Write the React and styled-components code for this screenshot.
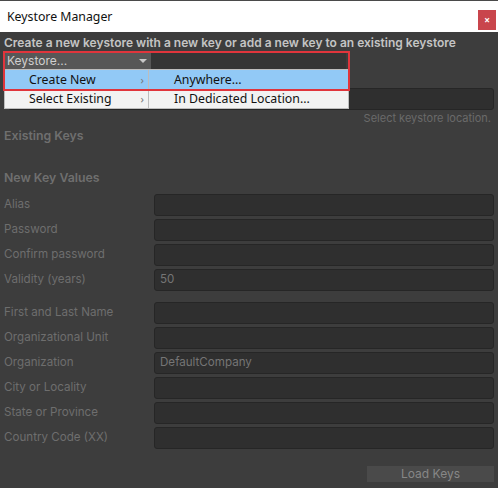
import styled, { createGlobalStyle } from 'styled-components';

const GlobalStyle = createGlobalStyle`
  html, body {
    margin: 0;
    padding: 0;
    background: #3d3d3d;
  }
`;

const Window = styled.div`
  position: relative;
  width: 498px;
  height: 488px;
  display: flex;
  flex-direction: column;
  background: #3d3d3d;
  font-family: Inter, "Liberation Sans", sans-serif;
  overflow: hidden;
`;

const TitleBar = styled.div`
  height: 31px;
  border-top: 1px solid #4a4a4a;
  background: #ffffff;
  display: flex;
  align-items: center;
  justify-content: space-between;
  padding: 0 2px 0 7px;
  font-family: "Noto Sans", "Open Sans", sans-serif;
  font-size: 12.3px;
  color: #111;
`;

const CloseButton = styled.div`
  width: 18px;
  height: 20px;
  background: #c9454c;
  color: #fff;
  font-size: 10px;
  font-weight: bold;
  display: flex;
  align-items: center;
  justify-content: center;
  margin-top: 6px;
`;

const Body = styled.div`
  flex: 1;
  display: flex;
  flex-direction: column;
  padding: 3px 4px 6px 4px;
`;

const Headline = styled.div`
  font-size: 12px;
  font-weight: 600;
  line-height: 16px;
  color: #c4c4c4;
  white-space: nowrap;
`;

const PickerRow = styled.div`
  display: flex;
  height: 16px;
  margin-top: 2px;
  margin-left: 1px;
`;

const Dropdown = styled.div`
  width: 146px;
  box-sizing: border-box;
  background: #575757;
  color: #cfcfcf;
  font-size: 12px;
  line-height: 16px;
  padding-left: 2px;
  display: flex;
  justify-content: space-between;
  align-items: center;
  padding-right: 4px;
`;

const Caret = styled.span`
  width: 0;
  height: 0;
  border-left: 4px solid transparent;
  border-right: 4px solid transparent;
  border-top: 4px solid #c8c8c8;
`;

const Filler = styled.div`
  width: 195px;
  background: #353535;
`;

const PathField = styled.div`
  height: 22px;
  box-sizing: border-box;
  margin: 19px 0 0 4px;
  background: #2f2f2f;
  border: 1px solid #262626;
  border-radius: 3px;
`;

const Hint = styled.div`
  font-size: 11px;
  line-height: 14px;
  color: #6a6a6a;
  text-align: right;
  padding-right: 3px;
  margin-top: 1px;
`;

const SectionTitle = styled.div`
  font-size: 12.3px;
  font-weight: 600;
  line-height: 14px;
  color: #6f6f6f;
  margin-top: ${(p) => p.$gap}px;
`;

const Group = styled.div`
  display: flex;
  flex-direction: column;
  gap: 3px;
  margin-top: ${(p) => p.$gap}px;
`;

const Row = styled.div`
  display: grid;
  grid-template-columns: 150px 1fr;
  align-items: center;
  height: 22px;
`;

const Label = styled.div`
  font-size: 11.6px;
  line-height: 14px;
  color: #6e6e6e;
  white-space: nowrap;
  margin-top: -3px;
`;

const Field = styled.div`
  height: 22px;
  box-sizing: border-box;
  background: #2f2f2f;
  border: 1px solid #262626;
  border-radius: 3px;
  font-size: 11.6px;
  color: #757575;
  padding-left: 5px;
  line-height: 18px;
`;

const Footer = styled.div`
  margin-top: auto;
  display: flex;
  justify-content: flex-end;
`;

const LoadButton = styled.div`
  width: 127px;
  height: 16px;
  background: #4a4a4a;
  color: #878787;
  font-size: 12px;
  line-height: 16px;
  text-align: center;
`;

const Menu = styled.div`
  position: absolute;
  top: ${(p) => p.$top}px;
  left: ${(p) => p.$left}px;
  width: ${(p) => p.$width}px;
  background: #f2f2f2;
  border: 1px solid #bdbdbd;
  box-sizing: border-box;
  font-family: "Noto Sans", "Open Sans", sans-serif;
  font-size: 12.3px;
  color: #111;
`;

const MenuItem = styled.div`
  height: 19px;
  display: flex;
  align-items: center;
  justify-content: space-between;
  padding: 0 4px 0 ${(p) => p.$indent}px;
  background: ${(p) => (p.$active ? '#92c9f6' : 'transparent')};
`;

const Chevron = styled.span`
  color: #777;
  font-size: 11px;
`;

const Annotation = styled.div`
  position: absolute;
  top: 51px;
  left: 3px;
  width: 347px;
  height: 40px;
  box-sizing: border-box;
  border: 2px solid #e0353c;
  pointer-events: none;
`;

const firstGroup = [
  ['Alias', ''],
  ['Password', ''],
  ['Confirm password', ''],
  ['Validity (years)', '50'],
];

const secondGroup = [
  ['First and Last Name', ''],
  ['Organizational Unit', ''],
  ['Organization', 'DefaultCompany'],
  ['City or Locality', ''],
  ['State or Province', ''],
  ['Country Code (XX)', ''],
];

const App = () => {
  return (
    <Window>
      <GlobalStyle />
      <TitleBar>
        <span>Keystore Manager</span>
        <CloseButton>×</CloseButton>
      </TitleBar>
      <Body>
        <Headline>Create a new keystore with a new key or add a new key to an existing keystore</Headline>
        <PickerRow>
          <Dropdown>
            Keystore...
            <Caret />
          </Dropdown>
          <Filler />
        </PickerRow>
        <PathField />
        <Hint>Select keystore location.</Hint>
        <SectionTitle $gap={4}>Existing Keys</SectionTitle>
        <SectionTitle $gap={28}>New Key Values</SectionTitle>
        <Group $gap={9}>
          {firstGroup.map(([label, value]) => (
            <Row key={label}>
              <Label>{label}</Label>
              <Field>{value}</Field>
            </Row>
          ))}
        </Group>
        <Group $gap={11}>
          {secondGroup.map(([label, value]) => (
            <Row key={label}>
              <Label>{label}</Label>
              <Field>{value}</Field>
            </Row>
          ))}
        </Group>
        <Footer>
          <LoadButton>Load Keys</LoadButton>
        </Footer>
      </Body>

      <Menu $top={69} $left={4} $width={145}>
        <MenuItem $indent={24} $active>
          Create New <Chevron>›</Chevron>
        </MenuItem>
        <MenuItem $indent={24}>
          Select Existing <Chevron>›</Chevron>
        </MenuItem>
      </Menu>
      <Menu $top={69} $left={148} $width={201}>
        <MenuItem $indent={25} $active>Anywhere...</MenuItem>
        <MenuItem $indent={25}>In Dedicated Location...</MenuItem>
      </Menu>
      <Annotation />
    </Window>
  );
};

export default App;
